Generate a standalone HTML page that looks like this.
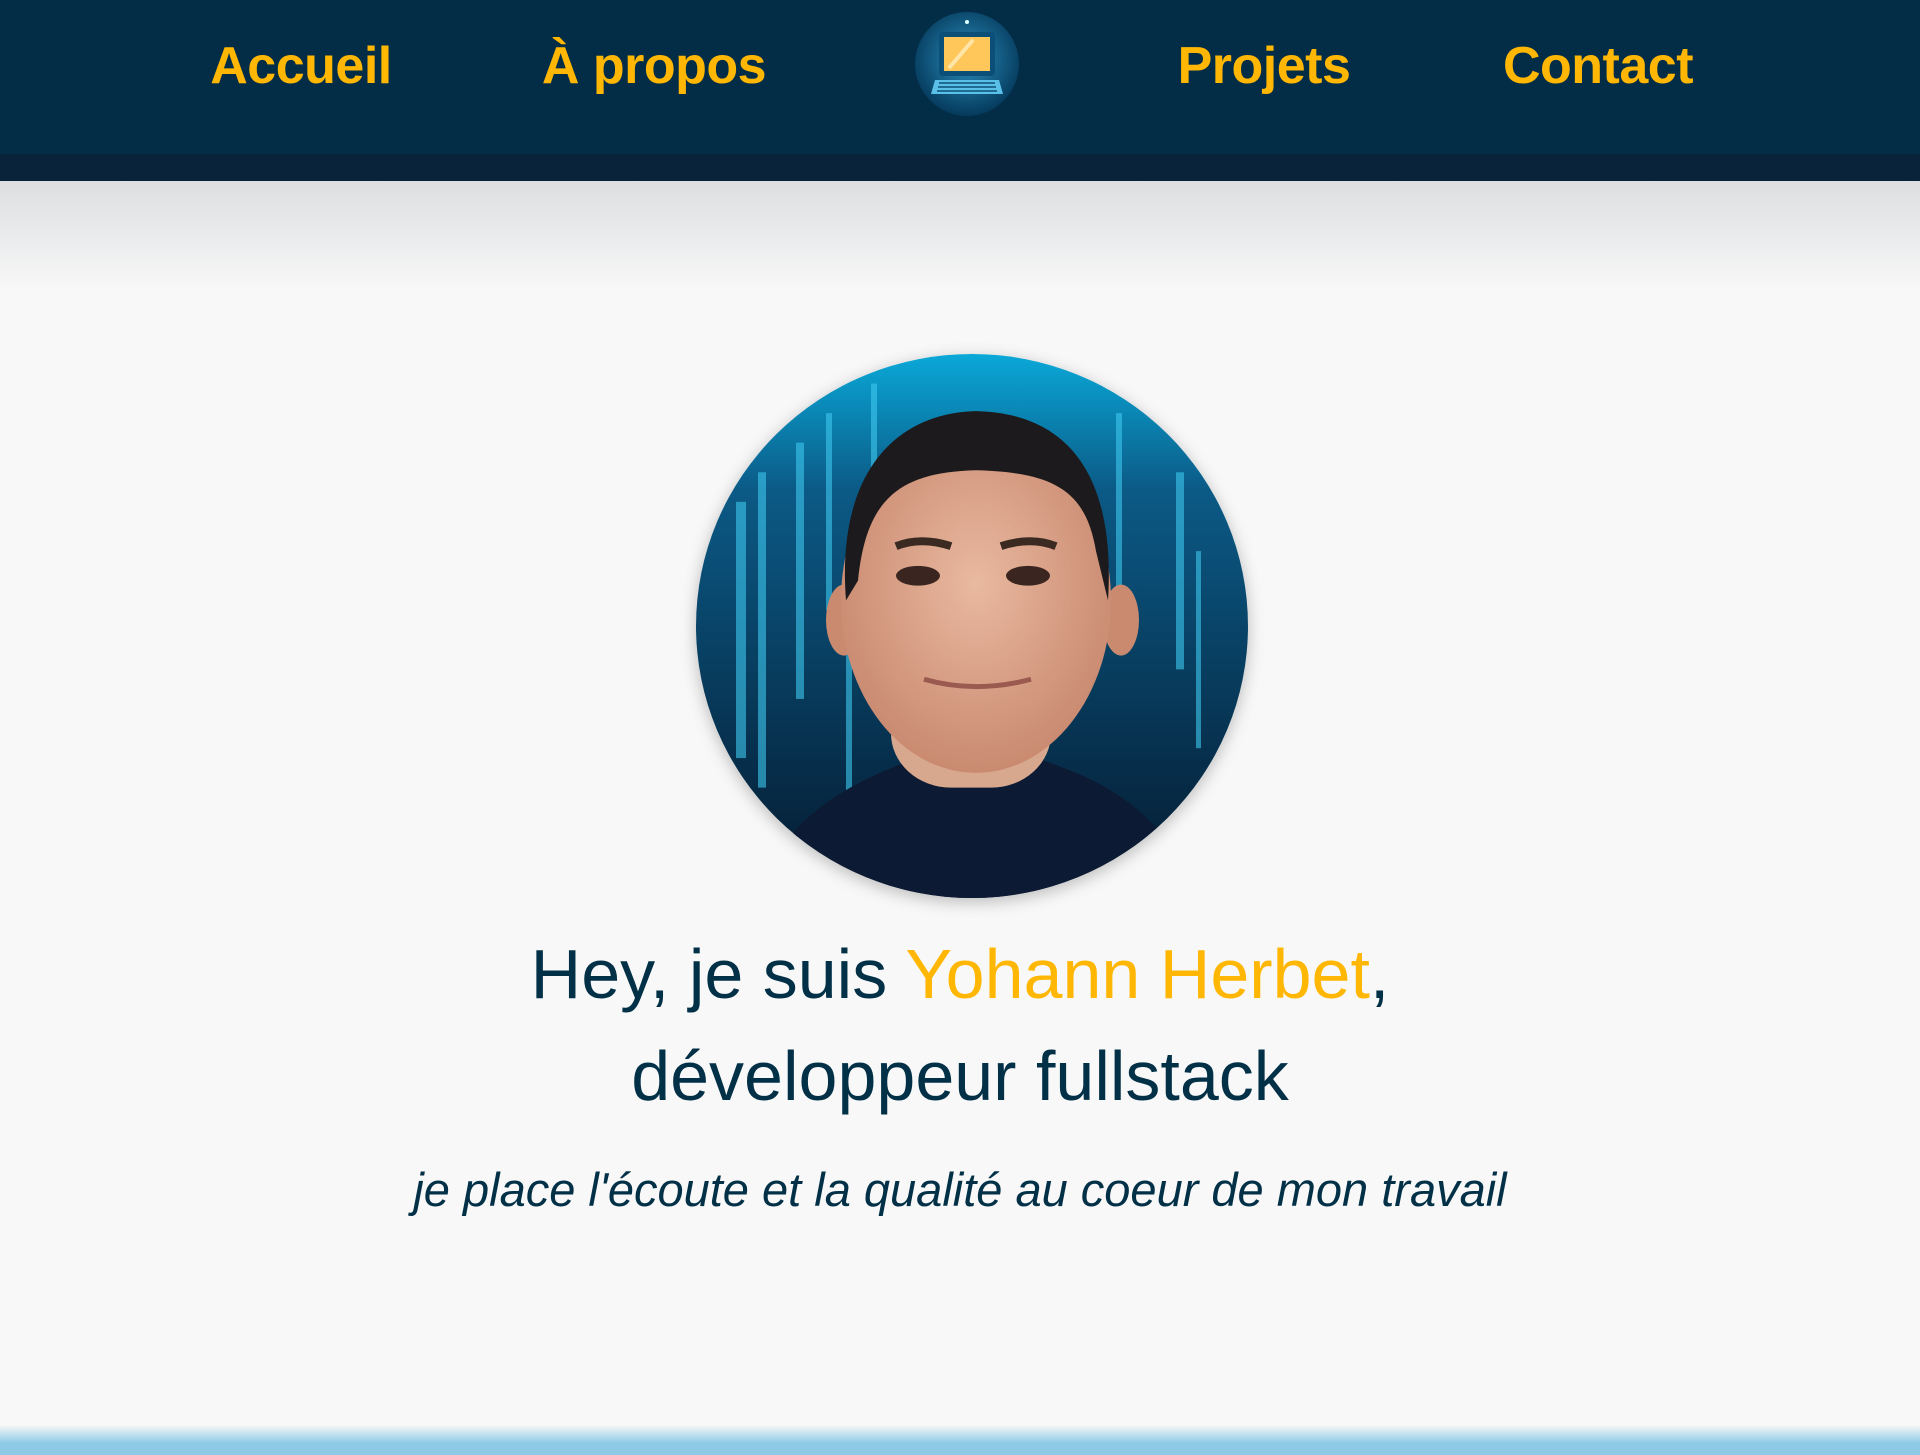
<!DOCTYPE html>
<html><head><meta charset="utf-8"><style>
*{margin:0;padding:0;box-sizing:border-box}
body{width:1920px;height:1455px;overflow:hidden;background:#f8f8f8;font-family:"Liberation Sans",sans-serif;position:relative}
.nav{position:absolute;left:0;top:0;width:1920px;height:154px;background:#032d47}
.band{position:absolute;left:0;top:154px;width:1920px;height:27px;background:#08233a}
.shade{position:absolute;left:0;top:181px;width:1920px;height:110px;background:linear-gradient(#dcdee0,#f8f8f8)}
.nav a{position:absolute;top:36px;color:#ffb703;font-weight:bold;font-size:52px;text-decoration:none;transform:translateX(-50%);white-space:nowrap;letter-spacing:-0.5px}
.bottom{position:absolute;left:0;top:1425px;width:1920px;height:30px;background:linear-gradient(#f8f8f8,#8ecae6 60%)}
.h{position:absolute;left:0;width:1920px;text-align:center;color:#023047;font-family:"Liberation Sans","DejaVu Sans",sans-serif}
.h1{top:923px;font-size:70px;line-height:102px}
.h1 span{color:#ffb703}
.sub{top:1162px;font-size:47px;font-style:italic}
.photo{position:absolute;left:696px;top:354px;width:552px;height:544px;border-radius:50%;box-shadow:0 4px 16px rgba(0,0,0,.25);overflow:hidden}
</style></head><body>
<div class="nav">
<a style="left:301px">Accueil</a>
<a style="left:654px">À propos</a>
<a style="left:1264px">Projets</a>
<a style="left:1598px">Contact</a>
<svg style="position:absolute;left:913px;top:10px" width="108" height="110" viewBox="0 0 108 110">
<defs><radialGradient id="g" cx="50%" cy="45%" r="55%"><stop offset="0" stop-color="#2a8fbf"/><stop offset="1" stop-color="#053a5c"/></radialGradient></defs>
<circle cx="54" cy="54" r="52" fill="url(#g)"/>
<rect x="26" y="22" width="56" height="44" rx="4" fill="#0b4f78"/>
<rect x="31" y="27" width="46" height="34" fill="#ffc75a"/>
<path d="M36 58 L60 30" stroke="#ffe6a8" stroke-width="4"/>
<path d="M22 70 H86 L90 84 H18 Z" fill="#5ac0e8"/>
<path d="M26 73 H82 M25 77 H83 M24 81 H84" stroke="#0b4f78" stroke-width="1.5"/>
<circle cx="54" cy="12" r="2" fill="#dff"/>
</svg>
</div>
<div class="band"></div>
<div class="shade"></div>
<div class="photo">
<svg width="552" height="544" viewBox="0 0 552 552" preserveAspectRatio="none">
<defs>
<linearGradient id="bg" x1="0" y1="0" x2="0" y2="1"><stop offset="0" stop-color="#0aa8d8"/><stop offset=".25" stop-color="#0b5a86"/><stop offset="1" stop-color="#04192e"/></linearGradient>
<radialGradient id="sk" cx="50%" cy="45%" r="55%"><stop offset="0" stop-color="#e9b9a0"/><stop offset="1" stop-color="#c98a70"/></radialGradient>
</defs>
<rect width="552" height="552" fill="url(#bg)"/>
<g fill="#3ec8ef" opacity=".6">
<rect x="40" y="150" width="10" height="260"/><rect x="62" y="120" width="8" height="320"/><rect x="100" y="90" width="8" height="260"/><rect x="130" y="60" width="6" height="200"/><rect x="175" y="30" width="6" height="120"/><rect x="420" y="60" width="6" height="180"/><rect x="480" y="120" width="8" height="200"/><rect x="500" y="200" width="5" height="200"/><rect x="150" y="250" width="6" height="200"/>
</g>
<path d="M60 552 C90 460 170 430 220 410 L340 410 C400 430 470 460 500 552 Z" fill="#0d1a33"/>
<rect x="195" y="330" width="160" height="110" rx="60" fill="#d8a88e"/>
<ellipse cx="148" cy="270" rx="18" ry="36" fill="#c98a70"/>
<ellipse cx="425" cy="270" rx="18" ry="36" fill="#c98a70"/>
<ellipse cx="280" cy="250" rx="135" ry="175" fill="url(#sk)"/>
<path d="M150 250 C140 120 200 60 280 58 C370 60 420 120 412 250 L400 200 C390 140 360 120 280 118 C200 120 170 150 162 230 Z" fill="#1c1a1c"/>
<ellipse cx="222" cy="225" rx="22" ry="10" fill="#3a2520"/>
<ellipse cx="332" cy="225" rx="22" ry="10" fill="#3a2520"/>
<path d="M200 195 Q225 185 255 195 M305 195 Q335 185 360 195" stroke="#3a2a22" stroke-width="8" fill="none"/>
<path d="M228 330 Q280 345 335 330" stroke="#9a5a50" stroke-width="5" fill="none"/>
</svg>
</div>
<div class="h h1">Hey, je suis <span>Yohann Herbet</span>,<br>développeur fullstack</div>
<div class="h sub">je place l'écoute et la qualité au coeur de mon travail</div>
<div class="bottom"></div>
</body></html>
